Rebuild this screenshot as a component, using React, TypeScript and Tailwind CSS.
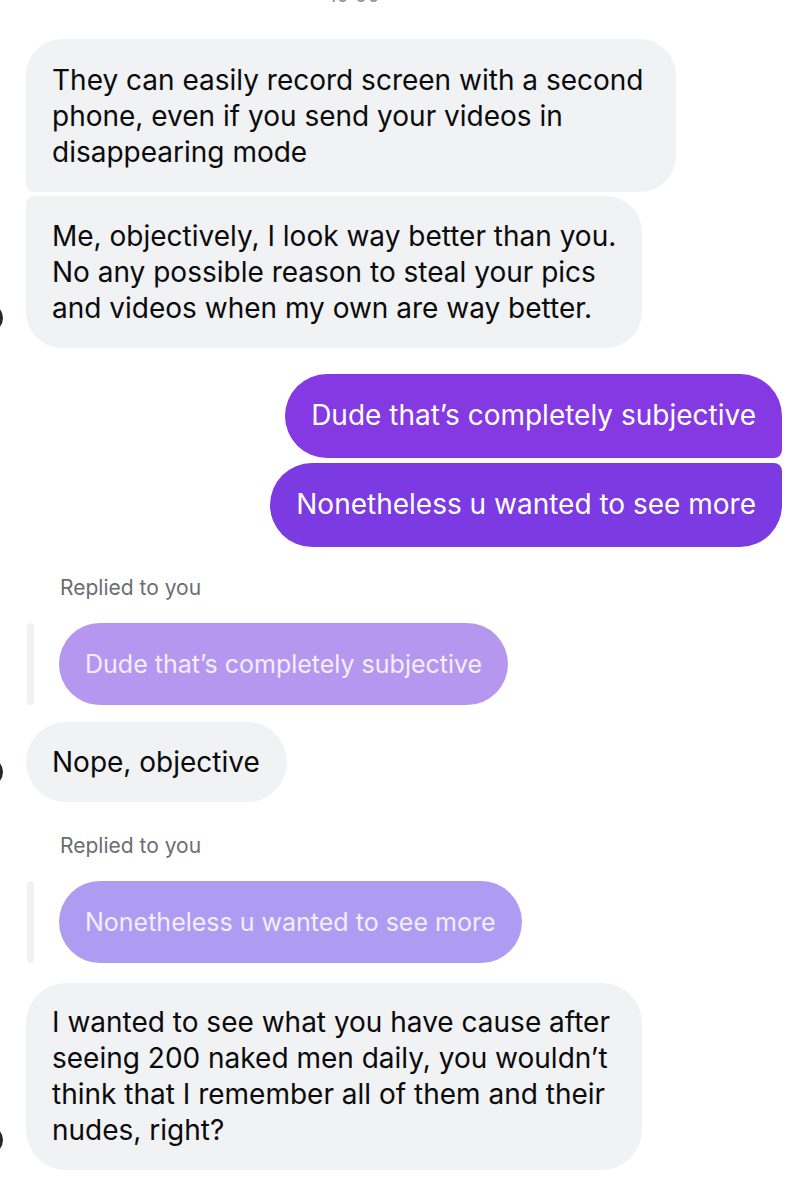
const font = { fontFamily: "Inter, 'Noto Sans', sans-serif" };

type Corner = "first" | "last" | "single";

const Avatar = () => (
  <div className="w-[28px] h-[28px] rounded-full bg-[#2b2624] ml-[-25px] mr-[23px] mb-[16px] shrink-0" />
);

const Received = ({ lines, corner, pad }: { lines: string[]; corner: Corner; pad: string }) => {
  const radius =
    corner === "first"
      ? "rounded-[36px] rounded-bl-[8px]"
      : corner === "last"
      ? "rounded-[36px] rounded-tl-[8px]"
      : "rounded-[40px]";
  return (
    <div className={`bg-[#f1f2f4] text-[#0b0b0c] text-[28px] leading-[36px] pl-[26px] ${pad} ${radius} w-fit`}>
      {lines.map((l, i) => (
        <div key={i} className="whitespace-nowrap">
          {l}
        </div>
      ))}
    </div>
  );
};

const ReplyQuote = ({ text, color }: { text: string; color: string }) => (
  <div className="flex flex-col">
    <div className="pl-[60px] text-[21px] leading-[28px] text-[#6c6c71] mb-[21px]">Replied to you</div>
    <div className="flex items-stretch">
      <div className="w-[7px] rounded-full bg-[#f0f1f3] ml-[27px] mr-[25px]" />
      <div
        className="rounded-[42px] px-[26px] py-[22px] text-[25px] leading-[38px] text-[#f3eeff] w-fit whitespace-nowrap"
        style={{ background: color }}
      >
        {text}
      </div>
    </div>
  </div>
);

export default function App() {
  return (
    <div className="w-[798px] min-h-[1200px] bg-white overflow-hidden" style={font}>
      <div className="h-[5px] overflow-hidden flex justify-center">
        <span className="text-[20px] leading-[28px] text-[#8e8e93] -mt-[19px] ml-[-90px]">10:00</span>
      </div>

      {/* first incoming group */}
      <div className="mt-[34px] flex items-end">
        <Avatar />
        <div className="flex flex-col gap-[4px]">
          <Received
            corner="first"
            pad="pr-[32px] pt-[23px] pb-[22px]"
            lines={[
              "They can easily record screen with a second",
              "phone, even if you send your videos in",
              "disappearing mode",
            ]}
          />
          <Received
            corner="last"
            pad="pr-[26px] pt-[22px] pb-[22px]"
            lines={[
              "Me, objectively, I look way better than you.",
              "No any possible reason to steal your pics",
              "and videos when my own are way better.",
            ]}
          />
        </div>
      </div>

      {/* outgoing */}
      <div className="mt-[26px] flex flex-col items-end gap-[5px] pr-[16px]">
        <div className="bg-[#8539e3] text-white text-[28px] leading-[36px] px-[26px] pt-[23px] pb-[25px] rounded-[42px] rounded-br-[8px] whitespace-nowrap">
          Dude that’s completely subjective
        </div>
        <div className="bg-[#7b3ae2] text-white text-[28px] leading-[36px] px-[26px] pt-[23px] pb-[25px] rounded-[42px] rounded-tr-[8px] whitespace-nowrap">
          Nonetheless u wanted to see more
        </div>
      </div>

      <div className="mt-[27px]">
        <ReplyQuote text="Dude that’s completely subjective" color="#b597f0" />
      </div>
      <div className="mt-[17px] flex items-end">
        <Avatar />
        <Received corner="single" pad="pr-[27px] py-[22px]" lines={["Nope, objective"]} />
      </div>

      <div className="mt-[30px]">
        <ReplyQuote text="Nonetheless u wanted to see more" color="#ae9cf2" />
      </div>
      <div className="mt-[20px] flex items-end">
        <Avatar />
        <Received
          corner="single"
          pad="pr-[32px] pt-[21px] pb-[22px]"
          lines={[
            "I wanted to see what you have cause after",
            "seeing 200 naked men daily, you wouldn’t",
            "think that I remember all of them and their",
            "nudes, right?",
          ]}
        />
      </div>
    </div>
  );
}
